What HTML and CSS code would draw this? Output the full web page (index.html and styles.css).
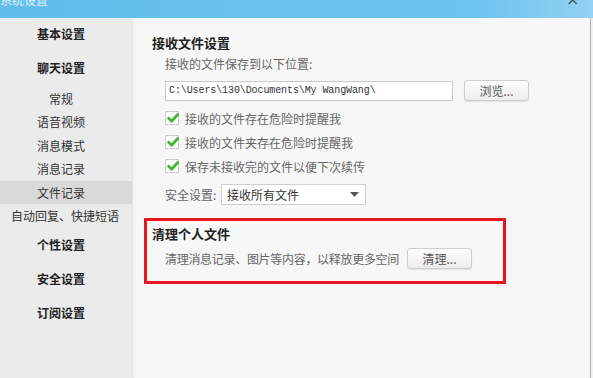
FILE: index.html
```html
<html>
    <head>
        <title>系统设置</title>
        <meta charset="utf-8">
        <link rel="stylesheet" href="styles.css">
    </head>
    <body>
        <div class="titlebar">
            <span class="title">系统设置</span>
            <span class="close">×</span>
        </div>
        <div class="window">
            <div class="sidebar">
                <div class="group">基本设置</div>
                <div class="group">聊天设置</div>
                <div class="sub">常规</div>
                <div class="sub">语音视频</div>
                <div class="sub">消息模式</div>
                <div class="sub">消息记录</div>
                <div class="sub active">文件记录</div>
                <div class="sub">自动回复、快捷短语</div>
                <div class="group">个性设置</div>
                <div class="group">安全设置</div>
                <div class="group">订阅设置</div>
            </div>
            <div class="content">
                <div class="heading">接收文件设置</div>
                <div class="indent">
                    <div class="label">接收的文件保存到以下位置:</div>
                    <div class="path-row">
                        <div class="input">C:\Users\130\Documents\My WangWang\</div>
                        <div class="btn browse">浏览...</div>
                    </div>
                    <div class="check">
                        <span class="box"><svg width="14" height="14" viewBox="0 0 14 14"><path d="M2.6 7.2 L5.6 10.2 L11.6 3.6" fill="none" stroke="#3fb52f" stroke-width="2.8" stroke-linecap="round" stroke-linejoin="round"/></svg></span>
                        <span>接收的文件存在危险时提醒我</span>
                    </div>
                    <div class="check">
                        <span class="box"><svg width="14" height="14" viewBox="0 0 14 14"><path d="M2.6 7.2 L5.6 10.2 L11.6 3.6" fill="none" stroke="#3fb52f" stroke-width="2.8" stroke-linecap="round" stroke-linejoin="round"/></svg></span>
                        <span>接收的文件夹存在危险时提醒我</span>
                    </div>
                    <div class="check">
                        <span class="box"><svg width="14" height="14" viewBox="0 0 14 14"><path d="M2.6 7.2 L5.6 10.2 L11.6 3.6" fill="none" stroke="#3fb52f" stroke-width="2.8" stroke-linecap="round" stroke-linejoin="round"/></svg></span>
                        <span>保存未接收完的文件以便下次续传</span>
                    </div>
                    <div class="security">
                        <span class="sec-label">安全设置:</span>
                        <div class="select">
                            <span>接收所有文件</span>
                            <svg width="9" height="5" viewBox="0 0 9 5"><path d="M0 0 H9 L4.5 5 Z" fill="#555"/></svg>
                        </div>
                    </div>
                </div>
                <div class="clean">
                    <div class="heading">清理个人文件</div>
                    <div class="clean-row">
                        <span class="label">清理消息记录、图片等内容，以释放更多空间</span>
                        <div class="btn">清理...</div>
                    </div>
                </div>
            </div>
        </div>
    </body>
</html>
```

FILE: styles.css
```css
body
{
    margin: 0;
    width: 593px;
    height: 378px;
    overflow: hidden;
    font-family: "Noto Sans CJK SC", "Noto Sans", sans-serif;
    font-size: 12px;
    background: #f0f0f0;
}
.titlebar
{
    height: 18px;
    background: linear-gradient(to right, #62bdec, #6cc3ef 80%, #93d2f3);
    position: relative;
    overflow: hidden;
}
.title
{
    position: absolute;
    left: 0;
    top: -8px;
    font-size: 12px;
    line-height: 16px;
    color: #dfeff8;
}
.close
{
    position: absolute;
    left: 566px;
    top: -8px;
    font-size: 16px;
    line-height: 16px;
    color: #3a5a70;
    font-family: "DejaVu Sans", sans-serif;
}
.window
{
    display: flex;
    height: 360px;
    width: 590px;
    border-right: 1px solid #b4b4b4;
}
.sidebar
{
    width: 132px;
    background: #ebebeb;
    color: #333;
}
.group
{
    height: 34px;
    line-height: 34px;
    text-align: center;
    font-weight: bold;
    color: #222;
    padding-right: 10px;
}
.group:first-child
{
    margin-top: -1px;
}
.group:nth-child(2)
{
    margin-bottom: 1.5px;
}
.sub
{
    height: 23.5px;
    line-height: 23.5px;
    text-align: center;
    padding-right: 10px;
}
.sub:nth-child(8)
{
    padding-right: 2px;
    white-space: nowrap;
}
.active
{
    background: #d9d9d9;
}
.content
{
    flex: 1;
    background: #f7f7f7;
    padding-left: 20px;
    box-shadow: inset 2px 0 2px -1px #e2e2e2;
}
.heading
{
    margin-top: 15px;
    font-size: 13px;
    font-weight: bold;
    line-height: 20px;
    color: #222;
}
.indent
{
    padding-left: 13px;
}
.label
{
    margin-top: 1px;
    line-height: 20px;
    color: #666;
}
.path-row
{
    display: flex;
    align-items: center;
    margin-top: 6px;
    height: 21px;
}
.input
{
    width: 283px;
    height: 18px;
    border: 1px solid #c9c9c9;
    background: #fff;
    padding-left: 3px;
    font-family: "Liberation Mono", monospace;
    font-size: 10px;
    letter-spacing: -0.1px;
    line-height: 18px;
    color: #333;
}
.btn
{
    width: 63px;
    height: 19px;
    border: 1px solid #cfcfcf;
    border-radius: 3px;
    background: linear-gradient(to bottom, #fefefe, #ececec);
    box-shadow: 0 1px 1px #e0e0e0;
    text-align: center;
    line-height: 19px;
    color: #555;
}
.browse
{
    margin-left: 11px;
}
.check
{
    display: flex;
    align-items: center;
    height: 24px;
    color: #666;
}
.path-row + .check
{
    margin-top: 5px;
}
.box
{
    width: 12px;
    height: 12px;
    border: 1px solid #cdcdcd;
    background: #fff;
    margin-right: 6px;
    position: relative;
}
.box svg
{
    position: absolute;
    left: 0;
    top: -1px;
}
.security
{
    display: flex;
    align-items: center;
    margin-top: 6px;
    height: 21px;
    color: #666;
}
.sec-label
{
    width: 56px;
}
.select
{
    width: 132px;
    height: 19px;
    border: 1px solid #cfcfcf;
    background: #fff;
    display: flex;
    align-items: center;
    justify-content: space-between;
    padding: 0 6px 0 5px;
    color: #333;
}
.clean
{
    margin-top: 13px;
    margin-left: -8px;
    width: 351px;
    height: 57px;
    border: 3px solid #e8161e;
    padding: 0 0 3px 5px;
}
.clean .heading
{
    margin-top: 3px;
}
.clean-row
{
    display: flex;
    align-items: center;
    margin-top: 4px;
    padding-left: 13px;
    height: 21px;
}
.clean-row .label
{
    margin: 0 8px 0 0;
    letter-spacing: -0.3px;
}
```
